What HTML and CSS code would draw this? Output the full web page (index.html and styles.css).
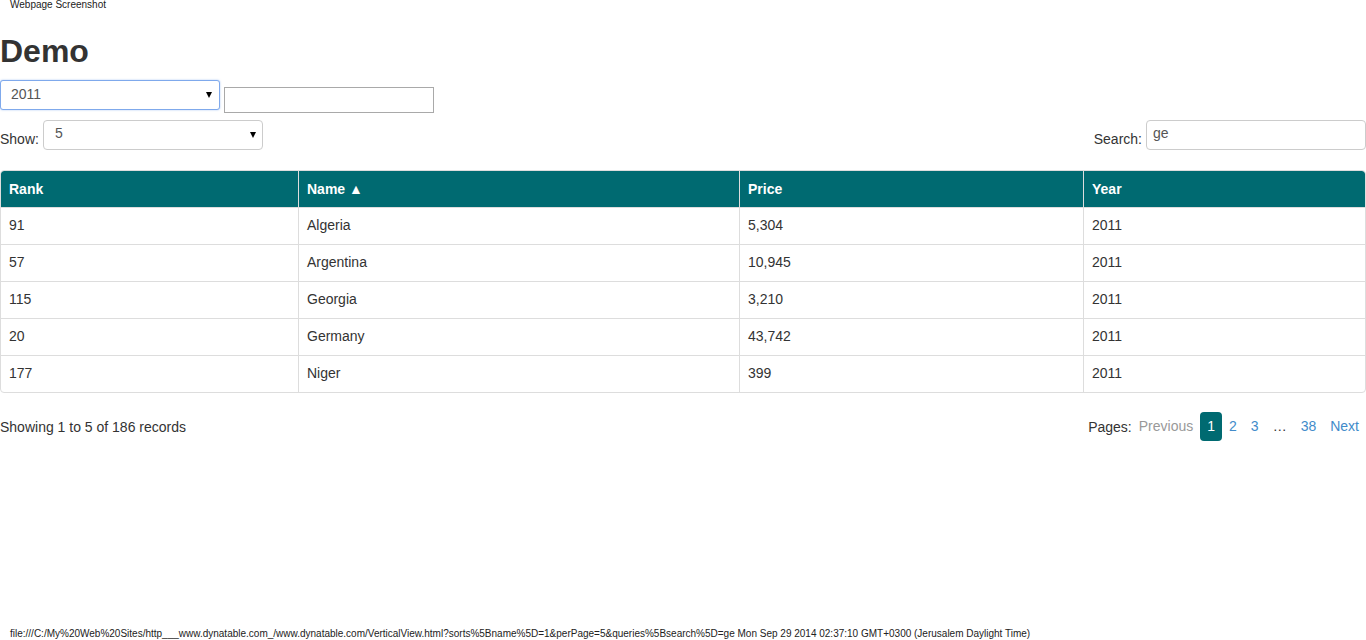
FILE: index.html
```html
<!DOCTYPE html>
<html>
<head>
<meta charset="utf-8">
<title>Demo</title>
<link rel="stylesheet" href="styles.css">
</head>
<body>
<div class="page">
  <div class="caption">Webpage Screenshot</div>
  <h1 class="title">Demo</h1>
  <div class="filters">
    <div class="select-wrap year">
      <select class="select focused"><option>2011</option></select>
    </div>
    <input class="plain-input" type="text">
  </div>
  <div class="controls">
    <div class="per-page">
      <span class="label">Show:</span>
      <div class="select-wrap show">
        <select class="select"><option>5</option></select>
      </div>
    </div>
    <div class="search">
      <span class="label">Search:</span>
      <input class="search-input" type="text" value="ge">
    </div>
  </div>
  <table class="data">
    <colgroup>
      <col class="c1"><col class="c2"><col class="c3"><col class="c4">
    </colgroup>
    <thead>
      <tr><th>Rank</th><th>Name ▲</th><th>Price</th><th>Year</th></tr>
    </thead>
    <tbody>
      <tr><td>91</td><td>Algeria</td><td>5,304</td><td>2011</td></tr>
      <tr><td>57</td><td>Argentina</td><td>10,945</td><td>2011</td></tr>
      <tr><td>115</td><td>Georgia</td><td>3,210</td><td>2011</td></tr>
      <tr><td>20</td><td>Germany</td><td>43,742</td><td>2011</td></tr>
      <tr><td>177</td><td>Niger</td><td>399</td><td>2011</td></tr>
    </tbody>
  </table>
  <div class="footer">
    <div class="records">Showing 1 to 5 of 186 records</div>
    <div class="pages">
      <span class="pages-label">Pages:</span>
      <span class="pg disabled">Previous</span>
      <span class="pg active">1</span>
      <span class="pg link">2</span>
      <span class="pg link">3</span>
      <span class="pg gap">…</span>
      <span class="pg link">38</span>
      <span class="pg link">Next</span>
    </div>
  </div>
  <div class="url">file:///C:/My%20Web%20Sites/http___www.dynatable.com_/www.dynatable.com/VerticalView.html?sorts%5Bname%5D=1&amp;perPage=5&amp;queries%5Bsearch%5D=ge Mon Sep 29 2014 02:37:10 GMT+0300 (Jerusalem Daylight Time)</div>
</div>
</body>
</html>
```

FILE: styles.css
```css
html, body {
  margin: 0;
  padding: 0;
  background: #fff;
}

body {
  font-family: "Liberation Sans", Arial, Helvetica, sans-serif;
  font-size: 14px;
  color: #333;
}

.page {
  min-height: 640px;
  display: flex;
  flex-direction: column;
}

.caption {
  font-size: 10px;
  line-height: 10px;
  height: 12px;
  padding-left: 10px;
  color: #222;
}

.title {
  font-size: 32px;
  font-weight: bold;
  line-height: 35px;
  margin: 22px 0 11px;
  color: #333;
}

.filters {
  display: flex;
  align-items: flex-start;
  gap: 4px;
  height: 30px;
}

.select-wrap {
  position: relative;
  width: 220px;
  height: 30px;
}

.select-wrap::after {
  content: "";
  position: absolute;
  right: 7px;
  top: 50%;
  margin-top: -3px;
  border-left: 3.5px solid transparent;
  border-right: 3.5px solid transparent;
  border-top: 6px solid #000;
  pointer-events: none;
}

.select {
  -webkit-appearance: none;
  appearance: none;
  box-sizing: border-box;
  width: 100%;
  height: 100%;
  margin: 0;
  background: #fff;
  border: 1px solid #ccc;
  border-radius: 4px;
  font-family: "Liberation Sans", Arial, sans-serif;
  font-size: 14px;
  color: #555;
  padding: 0 0 0 10px;
  outline: none;
}

.select.focused {
  border-color: #7fa9ec;
  border-radius: 3px;
  box-shadow: 0 0 2px rgba(102, 155, 233, 0.6);
  padding-bottom: 2px;
}

.year::after {
  right: 8px;
}

.show .select {
  padding: 0 0 4px 11px;
}

.plain-input {
  box-sizing: border-box;
  width: 210px;
  height: 26px;
  margin: 7px 0 0;
  border: 1px solid #a9a9a9;
  padding: 0 4px;
  font-family: "Liberation Sans", Arial, sans-serif;
  font-size: 14px;
}

.controls {
  display: flex;
  justify-content: space-between;
  align-items: flex-start;
  margin-top: 10px;
  height: 30px;
}

.per-page,
.search {
  display: flex;
  align-items: flex-start;
}

.label {
  padding-top: 11px;
  line-height: 16px;
  margin-right: 4px;
  color: #333;
}

.search-input {
  box-sizing: border-box;
  width: 220px;
  height: 30px;
  margin: 0;
  border: 1px solid #ccc;
  border-radius: 4px;
  padding: 0 6px 4px;
  font-family: "Liberation Sans", Arial, sans-serif;
  font-size: 14px;
  color: #555;
  outline: none;
}

.data {
  margin-top: 20px;
  width: 1366px;
  table-layout: fixed;
  border-collapse: separate;
  border-spacing: 0;
  border: 1px solid #ddd;
  border-radius: 4px;
  overflow: hidden;
}

.c1 { width: 297px; }
.c2 { width: 441px; }
.c3 { width: 344px; }
.c4 { width: 282px; }

.data th {
  background: #006a71;
  color: #fff;
  font-weight: bold;
  text-align: left;
  padding: 8px;
  line-height: 20px;
  height: 20px;
}

.data td {
  padding: 7px 8px 9px;
  line-height: 20px;
  border-top: 1px solid #ddd;
  color: #333;
}

.data th + th {
  border-left: 1px solid #ddd;
}

.data td + td {
  border-left: 1px solid #ddd;
}

.data thead tr:first-child th:first-child {
  border-top-left-radius: 3px;
}

.data thead tr:first-child th:last-child {
  border-top-right-radius: 3px;
}

.footer {
  display: flex;
  justify-content: space-between;
  align-items: center;
  margin-top: 19px;
  height: 29px;
}

.pages {
  display: flex;
  align-items: center;
}

.pg {
  padding: 0 7px;
  line-height: 29px;
  height: 29px;
}

.pg.disabled {
  color: #999;
}

.pg.active {
  background: #006a71;
  color: #fff;
  border-radius: 4px;
}

.pg.link {
  color: #428bca;
}

.pg.gap {
  color: #333;
}

.url {
  margin-top: auto;
  font-size: 10px;
  line-height: 12px;
  padding-left: 10px;
  color: #222;
  white-space: nowrap;
}
```
